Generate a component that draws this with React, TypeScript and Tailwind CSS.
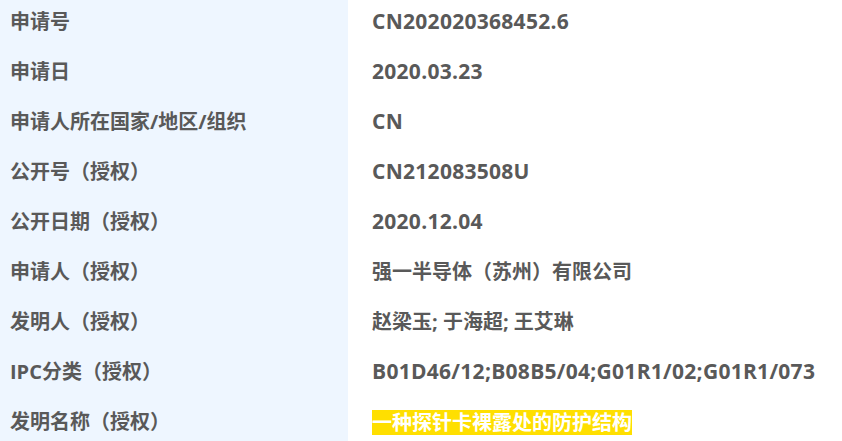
const rows: { label: string; value: string; highlight?: boolean }[] = [
  { label: '申请号', value: 'CN202020368452.6' },
  { label: '申请日', value: '2020.03.23' },
  { label: '申请人所在国家/地区/组织', value: 'CN' },
  { label: '公开号（授权）', value: 'CN212083508U' },
  { label: '公开日期（授权）', value: '2020.12.04' },
  { label: '申请人（授权）', value: '强一半导体（苏州）有限公司' },
  { label: '发明人（授权）', value: '赵梁玉; 于海超; 王艾琳' },
  { label: 'IPC分类（授权）', value: 'B01D46/12;B08B5/04;G01R1/02;G01R1/073' },
  { label: '发明名称（授权）', value: '一种探针卡裸露处的防护结构', highlight: true },
];

// latin-only values render a touch larger, like the original font
const isLatin = (s: string) => /^[\x00-\x7f]+$/.test(s);

export default function App() {
  return (
    <div
      className="w-[842px] h-[441px] overflow-hidden bg-white text-[20px] font-bold text-[#595959]"
      style={{ fontFamily: '"Open Sans", "Noto Sans CJK SC", sans-serif' }}
    >
      {rows.map(r => (
        <div key={r.label} className="flex h-[50px]">
          <div className="w-[348px] shrink-0 bg-[#eef6ff] flex items-center pl-[10px] pb-[6px]">
            {r.label}
          </div>
          <div className="flex-1 flex items-center pl-[24px] pb-[6px]">
            {r.highlight ? (
              <span className="inline-block h-[25px] leading-[25px] bg-[#ffdf00] text-white">{r.value}</span>
            ) : isLatin(r.value) ? (
              <span className="text-[21px] tracking-[0.28px]">{r.value}</span>
            ) : (
              r.value
            )}
          </div>
        </div>
      ))}
    </div>
  );
}
